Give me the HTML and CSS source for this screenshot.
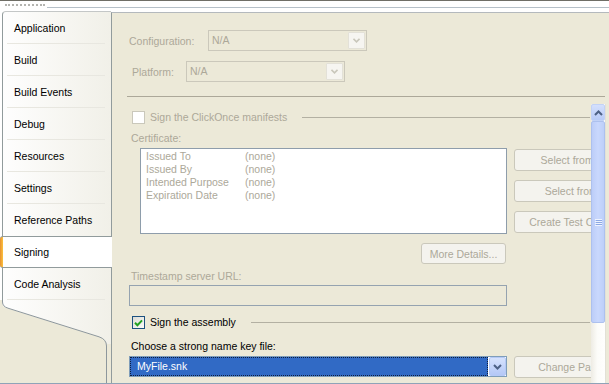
FILE: index.html
```html
<!DOCTYPE html>
<html>
<head>
<meta charset="utf-8">
<title>Signing</title>
<link rel="stylesheet" href="styles.css">
</head>
<body>
<div class="window">
  <div class="topstrip"><span class="remnant"></span><span class="topline"></span></div>
  <div class="main">
    <nav class="tabs">
      <ul class="tablist">
        <li class="tab">Application</li>
        <li class="tab">Build</li>
        <li class="tab">Build Events</li>
        <li class="tab">Debug</li>
        <li class="tab">Resources</li>
        <li class="tab">Settings</li>
        <li class="tab nosep">Reference Paths</li>
        <li class="tab selected">Signing</li>
        <li class="tab">Code Analysis</li>
      </ul>
      <svg class="tabfoot" width="111" height="83" viewBox="0 0 111 83">
        <defs>
          <linearGradient id="tg" x1="0" x2="1" y1="0" y2="0">
            <stop offset="0" stop-color="#fefefe"/>
            <stop offset="1" stop-color="#f1f0e8"/>
          </linearGradient>
        </defs>
        <rect width="111" height="83" fill="#ece9d8"/>
        <path d="M2,0 L2,2 Q2,7 8,8.5 L99,37 Q106.5,39.5 106.5,46 L106.5,83 L111,83 L111,0 Z" fill="url(#tg)"/>
        <rect x="107" y="44" width="4" height="39" fill="#ece9d8"/>
        <path d="M2.5,0 L2.5,2 Q2.5,6.5 8,8.2 L99,36.8 Q106.5,39.3 106.5,46 L106.5,83" fill="none" stroke="#8d979c"/>
      </svg>
    </nav>
    <section class="panel">
      <div class="cfg-row">
        <span class="cfg-label dis">Configuration:</span>
        <div class="combo"><span class="combo-val">N/A</span><span class="dd"><svg width="7" height="5" viewBox="0 0 7 5"><path d="M0.5,0.8 L3.5,3.8 L6.5,0.8" fill="none" stroke="#c9c7bb" stroke-width="1.6"/></svg></span></div>
      </div>
      <div class="plat-row">
        <span class="plat-label dis">Platform:</span>
        <div class="combo"><span class="combo-val">N/A</span><span class="dd"><svg width="7" height="5" viewBox="0 0 7 5"><path d="M0.5,0.8 L3.5,3.8 L6.5,0.8" fill="none" stroke="#c9c7bb" stroke-width="1.6"/></svg></span></div>
      </div>
      <div class="sep"></div>
      <div class="scrollarea">
        <div class="content">
          <div class="grp">
            <span class="chk"></span>
            <span class="grp-text dis">Sign the ClickOnce manifests</span>
            <span class="grp-line"></span>
          </div>
          <div class="lbl dis">Certificate:</div>
          <div class="cert-row">
            <div class="listbox">
              <div class="lrow"><span>Issued To</span><span>(none)</span></div>
              <div class="lrow"><span>Issued By</span><span>(none)</span></div>
              <div class="lrow"><span>Intended Purpose</span><span>(none)</span></div>
              <div class="lrow"><span>Expiration Date</span><span>(none)</span></div>
            </div>
            <div class="btncol">
              <button class="btn" disabled>Select from Store...</button>
              <button class="btn" disabled>Select from File...</button>
              <button class="btn" disabled>Create Test Certificate...</button>
            </div>
          </div>
          <button class="btn more" disabled>More Details...</button>
          <div class="lbl dis ts">Timestamp server URL:</div>
          <div class="textbox"></div>
          <div class="grp grp2">
            <span class="chk on"><svg width="9" height="8" viewBox="0 0 9 8"><path d="M1,3.8 L3.4,6.2 L8,1.4" fill="none" stroke="#21a121" stroke-width="2"/></svg></span>
            <span class="grp-text">Sign the assembly</span>
            <span class="grp-line"></span>
          </div>
          <div class="lbl choose">Choose a strong name key file:</div>
          <div class="key-row">
            <div class="combo sel">
              <span class="combo-val"><span class="focus">MyFile.snk</span></span>
              <span class="dd blue"><svg width="9" height="6" viewBox="0 0 9 6"><path d="M1,1 L4.5,4.5 L8,1" fill="none" stroke="#4d6185" stroke-width="2"/></svg></span>
            </div>
            <button class="btn" disabled>Change Password...</button>
          </div>
        </div>
        <div class="scrollbar">
          <div class="sb-up"><svg width="9" height="6" viewBox="0 0 9 6"><path d="M1,5 L4.5,1.5 L8,5" fill="none" stroke="#4d6185" stroke-width="2"/></svg></div>
          <div class="sb-thumb"><svg width="7" height="7" viewBox="0 0 7 7"><path d="M0,0.5 H7 M0,2.5 H7 M0,4.5 H7 M0,6.5 H7" stroke="#eef3fe" stroke-width="1"/><path d="M1,1.5 H7 M1,3.5 H7 M1,5.5 H7" stroke="#8ca8e4" stroke-width="1"/></svg></div>
          <div class="sb-track"></div>
        </div>
      </div>
    </section>
  </div>
  <div class="bottomline"></div>
</div>
</body>
</html>
```
FILE: styles.css
```css
* { box-sizing: border-box; }
html, body { margin: 0; padding: 0; }
body {
  width: 609px;
  height: 384px;
  overflow: hidden;
  background: #fff;
  font-family: "Liberation Sans", Arial, sans-serif;
  font-size: 10.5px;
  color: #000;
}
.window { width: 609px; height: 384px; display: flex; flex-direction: column; }

.topstrip {
  height: 11px;
  flex: none;
  border-top: 1px solid #6f6e66;
  display: flex;
  align-items: flex-start;
}
.remnant { width: 40px; height: 4px; margin: 1px 2px 0 5px; border-bottom: 2px dotted #b4b4b0; }
.topline { flex: 1; height: 1px; margin-top: 6px; background: #b6c0c8; }

.main { display: flex; height: 372px; flex: none; }

.tabs { width: 111px; flex: none; display: flex; flex-direction: column; }
.tablist {
  list-style: none;
  margin: 0 0 0 2px;
  padding: 0;
  width: 109px;
  border-top: 1px solid #c4c7c7;
  border-left: 1px solid #919b9c;
  border-top-left-radius: 4px;
  background: linear-gradient(to right, #fefefe, #f1f0e8);
}
.tab {
  height: 32px;
  line-height: 32px;
  padding-left: 11px;
  white-space: nowrap;
  background: linear-gradient(#e8e7e0, #e8e7e0) no-repeat 4px 31px / 98px 1px;
}
.tab.nosep { background: none; }
.tab.selected {
  position: relative;
  z-index: 2;
  margin-left: -3px;
  width: 112px;
  padding-left: 14px;
  line-height: 30px;
  border-top: 1px solid #919b9c;
  border-bottom: 1px solid #919b9c;
  border-radius: 3px 0 0 3px;
  background: linear-gradient(to right, #e8902f 0, #fcc23e 3px, #fff 3px);
}
.tabfoot { display: block; flex: none; }

.panel {
  flex: 1;
  min-width: 0;
  margin-top: 1px;
  border-left: 1px solid #919b9c;
  border-top: 1px solid #b4b9bd;
  background: #ece9d8;
  display: flex;
  flex-direction: column;
}
.dis { color: #aca899; }

.cfg-row { display: flex; align-items: center; height: 21px; margin-top: 17px; padding-left: 17px; }
.cfg-label { width: 79px; flex: none; }
.plat-row { display: flex; align-items: center; height: 21px; margin-top: 10px; padding-left: 20px; }
.plat-label { width: 54px; flex: none; }

.combo {
  display: flex;
  width: 159px;
  height: 21px;
  flex: none;
  border: 1px solid #cbc8bb;
  background: #ece9d8;
}
.combo-val { flex: 1; padding-left: 3px; line-height: 19px; color: #aca899; overflow: hidden; }
.dd {
  width: 17px;
  margin: 1px;
  flex: none;
  border: 1px solid #e3e1d8;
  border-radius: 1px;
  background: #f6f5f1;
  display: flex;
  align-items: center;
  justify-content: center;
}

.sep { height: 1px; margin: 14px 4px 0 15px; background: #aca899; flex: none; }

.scrollarea { flex: 1; display: flex; margin-top: 7px; min-height: 0; }
.content { width: 479px; flex: none; overflow: hidden; padding-left: 17px; }

.grp { display: flex; align-items: center; height: 13px; margin-top: 7px; padding-left: 3px; }
.chk { width: 13px; height: 13px; flex: none; border: 1px solid #cac8bb; background: #fff; }
.chk.on {
  border-color: #1c5180;
  background: linear-gradient(135deg, #dcdcd5, #fbfbf9);
  display: flex;
  align-items: center;
  justify-content: center;
}
.grp-text { margin-left: 5px; white-space: nowrap; line-height: 13px; }
.grp-line { flex: 1; height: 1px; margin: 0 1px 0 15px; background: #b3b0a2; }

.lbl { height: 13px; line-height: 13px; padding-left: 2px; margin-top: 8px; white-space: nowrap; }

.cert-row { display: flex; margin-top: 3px; }
.listbox {
  width: 367px;
  height: 86px;
  flex: none;
  margin-left: 11px;
  border: 1px solid #8e9dab;
  background: #fff;
  padding: 1px 0 0 5px;
}
.lrow { display: grid; grid-template-columns: 99px auto; height: 13px; line-height: 13px; color: #aca899; white-space: nowrap; }
.btncol { display: flex; flex-direction: column; gap: 9px; margin-left: 7px; padding-top: 1px; flex: none; }

.btn {
  display: block;
  width: 143px;
  height: 22px;
  flex: none;
  border: 1px solid #cac8bb;
  border-radius: 3px;
  background: #f4f3ee;
  color: #aca899;
  font: inherit;
  padding: 0;
  white-space: nowrap;
  overflow: hidden;
  text-align: center;
}
.btn.more { width: 85px; height: 21px; margin: 9px 0 0 292px; }

.lbl.ts { margin-top: 6px; }
.textbox { width: 378px; height: 21px; margin-top: 2px; border: 1px solid #95a3b0; background: #ece9d8; }

.grp.grp2 { margin-top: 10px; }
.lbl.choose { margin-top: 11px; }

.key-row { display: flex; gap: 7px; margin-top: 3px; }
.combo.sel { width: 378px; border-color: #7f9db9; background: #fff; }
.combo.sel .combo-val { padding: 0; background: #316ac5; color: #fff; display: flex; }
.focus { flex: 1; border: 1px dotted #0e1e40; padding-left: 6px; line-height: 17px; }
.dd.blue {
  margin: 0 0 0 1px;
  width: 17px;
  border: 1px solid #b5c9f6;
  border-radius: 2px;
  background: linear-gradient(#d6e2fd, #b4c8f6);
}

.scrollbar {
  width: 15px;
  flex: none;
  display: flex;
  flex-direction: column;
  border-right: 1px solid #e2e0d6;
  background: linear-gradient(to right, #eeece4, #fcfcf9 45%, #fefefd);
}
.sb-up {
  height: 17px;
  flex: none;
  border: 1px solid #c2d2f6;
  border-radius: 2px;
  background: linear-gradient(#d4e0fd, #b8cbf7);
  display: flex;
  align-items: center;
  justify-content: center;
}
.sb-thumb {
  height: 202px;
  flex: none;
  border: 1px solid #adc1ee;
  border-radius: 2px;
  background: linear-gradient(to right, #bccdf8, #c9d8fd 50%, #bdcff9);
  display: flex;
  align-items: center;
  justify-content: center;
}
.sb-track { flex: 1; }

.bottomline { height: 1px; flex: none; background: #8fa3b8; }
```
